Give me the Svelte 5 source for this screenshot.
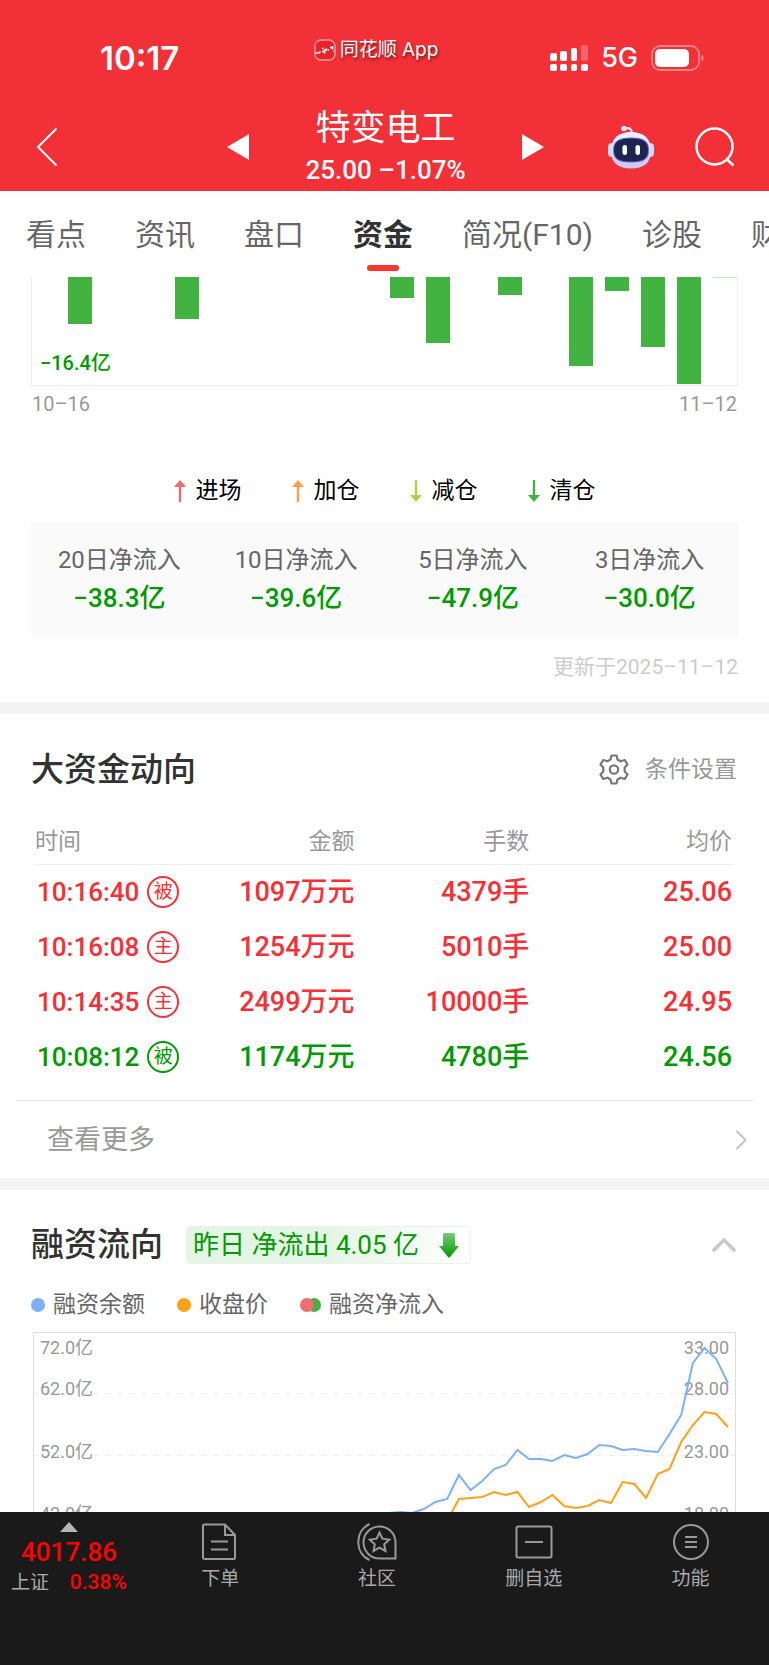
<script>
  const tabs = ['看点', '资讯', '盘口', '资金', '简况(F10)', '诊股', '财务']
  let active = '资金'

  // net outflow per day, in px below the axis
  const bars = [0, 47, 0, 0, 42, 0, 0, 0, 0, 0, 21, 66, 0, 18, 0, 89, 14, 70, 107, 1]

  const arrows = [
    { label: '进场', color: '#f06a6a', up: true },
    { label: '加仓', color: '#ff9f4d', up: true },
    { label: '减仓', color: '#a9d34f', up: false },
    { label: '清仓', color: '#42b340', up: false },
  ]

  const inflows = [
    { label: '20日净流入', value: '−38.3亿' },
    { label: '10日净流入', value: '−39.6亿' },
    { label: '5日净流入', value: '−47.9亿' },
    { label: '3日净流入', value: '−30.0亿' },
  ]

  const trades = [
    { time: '10:16:40', kind: '被', amount: '1097万元', hands: '4379手', price: '25.06', up: true },
    { time: '10:16:08', kind: '主', amount: '1254万元', hands: '5010手', price: '25.00', up: true },
    { time: '10:14:35', kind: '主', amount: '2499万元', hands: '10000手', price: '24.95', up: true },
    { time: '10:08:12', kind: '被', amount: '1174万元', hands: '4780手', price: '24.56', up: false },
  ]

  const balance = [181, 180, 181, 177, 170, 167, 143, 158, 149, 137, 133, 118, 127, 127, 129, 123, 126, 122, 113, 114, 118, 117, 119, 120, 102, 83, 31, 16, 27, 51]
  const close = [189, 167, 166, 165, 160, 163, 160, 175, 170, 163, 174, 176, 174, 168, 171, 150, 152, 166, 142, 137, 110, 93, 80, 82, 95]

  // both series end at the same day on the right
  const line = ys => ys.map((y, i) => `${(695 - (ys.length - 1 - i) * 11.7).toFixed(1)},${y}`).join(' ')

  const ticks = [
    { y: 22, left: '72.0亿', right: '33.00' },
    { y: 63, left: '62.0亿', right: '28.00' },
    { y: 126, left: '52.0亿', right: '23.00' },
    { y: 188, left: '42.0亿', right: '18.00' },
  ]
</script>

<div class="app">
  <header>
    <div class="status">
      <span class="clock">10:17</span>
      <span class="source">
        <svg width="22" height="22" viewBox="0 0 22 22" fill="none">
          <rect x="1" y="1" width="20" height="20" rx="6" fill="#e5252b" stroke="#ff9a9a" stroke-width="1.4" />
          <path d="M1.500 14h2.500M4.500 14.500l2-2M8 9.500h1.500M8 12.500h1.500M10.500 10.500v4M12.500 9.500l-1 2.500M13.500 11h1.500M16 8.500h1.500M18.500 7v3.500M19 12.500h1.500" stroke="#fff" stroke-width="1.700" />
        </svg>
        同花顺 App
      </span>
      <span class="phone">
        <svg width="38" height="28" viewBox="0 0 38 28" fill="#fff">
          <rect x="0" y="9" width="7" height="8" rx="2" />
          <rect x="10" y="7" width="7" height="10" rx="2" />
          <rect x="21" y="4" width="6" height="13" rx="2" />
          <rect x="31" y="1" width="7" height="16" rx="2" opacity=".25" />
          <rect x="0" y="20" width="7" height="7" rx="2" />
          <rect x="10" y="20" width="7" height="7" rx="2" />
          <rect x="21" y="20" width="6" height="7" rx="2" />
          <rect x="31" y="20" width="7" height="7" rx="2" />
        </svg>
        <span class="net">5G</span>
        <svg width="53" height="26" viewBox="0 0 53 26" fill="none">
          <rect x="1" y="1" width="47" height="24" rx="8" stroke="#fff" stroke-opacity=".4" stroke-width="1.800" />
          <rect x="4" y="4" width="34" height="18" rx="5" fill="#fff" />
          <path d="M50.500 9.500q2 1 2 3.500t-2 3.500z" fill="#fff" fill-opacity=".5" />
        </svg>
      </span>
    </div>

    <div class="navbar">
      <button class="back" aria-label="返回">
        <svg width="22" height="40" viewBox="0 0 22 40" fill="none">
          <path d="M20.500 1.500L2 20l18.500 18.500" stroke="#fff" stroke-width="2" />
        </svg>
      </button>
      <div class="stock">
        <button aria-label="上一只">
          <svg width="22" height="26" viewBox="0 0 22 26"><path d="M22 0v26L0 13z" fill="#fff" /></svg>
        </button>
        <div class="name">
          <h1>特变电工</h1>
          <p>25.00 –1.07%</p>
        </div>
        <button aria-label="下一只">
          <svg width="22" height="26" viewBox="0 0 22 26"><path d="M0 0v26l22-13z" fill="#fff" /></svg>
        </button>
      </div>
      <div class="tools">
        <button aria-label="智能助手">
          <svg width="48" height="44" viewBox="0 0 48 44">
            <defs>
              <linearGradient id="shell" x1="0" y1="0" x2="0" y2="1">
                <stop offset="0" stop-color="#f2f2ff" />
                <stop offset="1" stop-color="#c4c8f0" />
              </linearGradient>
              <linearGradient id="visor" x1="0" y1="0" x2="1" y2="1">
                <stop offset="0" stop-color="#4aa0e0" />
                <stop offset=".5" stop-color="#7a50e0" />
                <stop offset="1" stop-color="#6a5af0" />
              </linearGradient>
            </defs>
            <path d="M18 3.500q7-1.500 7 5" fill="none" stroke="#e4e4fa" stroke-width="2.200" />
            <circle cx="17" cy="3.500" r="2.700" fill="#ececff" />
            <rect x="1" y="18" width="8" height="14" rx="4" fill="#d4d6f6" />
            <rect x="39" y="18" width="8" height="14" rx="4" fill="#d4d6f6" />
            <path d="M24 7c12 0 20 6 20 18.500S37 43.500 24 43.500 4 38 4 25.500 12 7 24 7z" fill="url(#shell)" />
            <path d="M24 12.500c11 0 18 2.500 18 12.500s-6 12.500-18 12.500S6 35 6 25s7-12.500 18-12.500z" fill="url(#visor)" />
            <path d="M24 13.500c10.800 0 17 2 17 11.500s-6 11.500-17 11.500S7 34.500 7 25s6.200-11.500 17-11.500z" fill="#1d2450" />
            <rect x="15.500" y="20" width="4.500" height="10" rx="2.200" fill="#fff" />
            <rect x="28.500" y="20" width="4.500" height="10" rx="2.200" fill="#fff" />
          </svg>
        </button>
        <button aria-label="搜索">
          <svg width="40" height="40" viewBox="0 0 40 40" fill="none" stroke="#fff" stroke-width="2.500">
            <circle cx="19.500" cy="19.500" r="18" />
            <path d="M31 31.500l7.500 7" />
          </svg>
        </button>
      </div>
    </div>
  </header>

  <nav class="tabs">
    {#each tabs as tab}
      <button class:active={tab === active} on:click={() => (active = tab)}>{tab}</button>
    {/each}
  </nav>

  <section class="flow">
    <div class="plot">
      {#each bars as height}
        <i class:faint={height === 1} style="height: {height}px"></i>
      {/each}
      <span class="min">−16.4亿</span>
    </div>
    <div class="dates"><span>10–16</span><span>11–12</span></div>

    <ul class="arrows">
      {#each arrows as a}
        <li>
          <svg width="12" height="22" viewBox="0 0 12 22" fill={a.color}>
            {#if a.up}
              <path d="M6 0l6 7H7.200v15H4.800V7H0z" />
            {:else}
              <path d="M6 22l6-7H7.200V0H4.800v15H0z" />
            {/if}
          </svg>
          {a.label}
        </li>
      {/each}
    </ul>

    <dl class="inflows">
      {#each inflows as item}
        <div>
          <dt>{item.label}</dt>
          <dd>{item.value}</dd>
        </div>
      {/each}
    </dl>
    <p class="updated">更新于2025–11–12</p>
  </section>

  <section class="big">
    <div class="head">
      <h2>大资金动向</h2>
      <button class="settings">
        <svg width="32" height="32" viewBox="0 0 32 32" fill="none" stroke="#777" stroke-width="2.200" stroke-linejoin="round">
          <path d="M13.500 1.500h5l1 4 3 1.800 4.300-1.300 2.700 4.500-2.800 3v4l2.800 3-2.700 4.500-4.300-1.300-3 1.800-1 4h-5l-1-4-3-1.800L5.200 25l-2.700-4.500 2.800-3v-4l-2.800-3L5.200 6l4.300 1.300 3-1.800z" />
          <circle cx="16" cy="15.500" r="4.200" />
        </svg>
        条件设置
      </button>
    </div>

    <table>
      <thead>
        <tr><th>时间</th><th>金额</th><th>手数</th><th>均价</th></tr>
      </thead>
      <tbody>
        {#each trades as t}
          <tr class:down={!t.up}>
            <td><div class="time">{t.time}<span class="kind">{t.kind}</span></div></td>
            <td>{t.amount}</td>
            <td>{t.hands}</td>
            <td>{t.price}</td>
          </tr>
        {/each}
      </tbody>
    </table>

    <a class="more" href="#more">
      查看更多
      <svg width="12" height="20" viewBox="0 0 12 20" fill="none">
        <path d="M1.500 1l9 9-9 9" stroke="#c4c4c4" stroke-width="2" />
      </svg>
    </a>
  </section>

  <section class="margin">
    <div class="head">
      <h2>融资流向</h2>
      <span class="badge">
        昨日 净流出 4.05 亿
        <svg width="20" height="25" viewBox="0 0 20 25">
          <defs>
            <linearGradient id="fall" x1="0" y1="0" x2="0" y2="1">
              <stop offset="0" stop-color="#7cc97c" />
              <stop offset="1" stop-color="#009900" />
            </linearGradient>
          </defs>
          <path d="M5.500 0h9q1.500 0 1.500 1.500V13h4l-9 11q-1 1-2 0L0 13h4V1.500Q4 0 5.500 0z" fill="url(#fall)" />
        </svg>
      </span>
      <button class="fold" aria-label="收起">
        <svg width="26" height="16" viewBox="0 0 26 16" fill="none">
          <path d="M2 14L13 3l11 11" stroke="#c8c8c8" stroke-width="3.500" />
        </svg>
      </button>
    </div>

    <ul class="series">
      <li><i class="dot blue"></i>融资余额</li>
      <li><i class="dot orange"></i>收盘价</li>
      <li><span class="pair"><i class="dot red"></i><i class="dot green"></i></span>融资净流入</li>
    </ul>

    <div class="trend">
      <svg viewBox="0 0 705 180">
        <path class="frame" d="M.5 180V.5h702V180" />
        <path class="grid" d="M0 61.500h703M0 123.500h703" />
        {#each ticks as t}
          <text x="7" y={t.y}>{t.left}</text>
          <text x="696" y={t.y} text-anchor="end">{t.right}</text>
        {/each}
        <polyline points={line(close)} stroke="#ffa01e" />
        <polyline points={line(balance)} stroke="#7db1f5" />
      </svg>
    </div>
  </section>

  <footer>
    <a class="index" href="#index">
      <svg width="18" height="10" viewBox="0 0 18 10"><path d="M9 0l9 10H0z" fill="#b4b4b4" /></svg>
      <b>4017.86</b>
      <span>上证 <em>0.38%</em></span>
    </a>
    <a href="#order">
      <svg width="40" height="38" viewBox="0 0 40 38">
        <path d="M4.500 1.500H25l10 10.500v22.500q0 1.500-1.500 1.500h-28Q3 36 3 34.500V3q0-1.500 1.500-1.500zM25 1.500V12h10M11 18.500h17M11 26.500h17" />
      </svg>
      下单
    </a>
    <a href="#community">
      <svg width="40" height="38" viewBox="0 0 40 38">
        <path d="M12.500 1C-2.500 8-2.500 30 12.500 37M38.500 35.500H23A16 16 0 1 1 38.500 19z" />
        <path d="M22.500 9.500l2.900 6.200 6.800.9-5 4.700 1.300 6.700-6-3.300-6 3.300 1.300-6.700-5-4.700 6.800-.9z" />
      </svg>
      社区
    </a>
    <a href="#remove">
      <svg width="40" height="38" viewBox="0 0 40 38">
        <rect x="2.500" y="3.500" width="35" height="31" rx="1.500" />
        <path d="M11 19h18" />
      </svg>
      删自选
    </a>
    <a href="#menu">
      <svg width="40" height="38" viewBox="0 0 40 38">
        <circle cx="20" cy="19" r="17" />
        <path d="M14 14h12M14 19h12M14 24h12" />
      </svg>
      功能
    </a>
  </footer>
</div>

<style>
  :global(body) {
    background: #fff;
  }
  .app {
    display: flex;
    flex-direction: column;
    min-height: 100vh;
    overflow: hidden;
    font-family: Roboto, 'Noto Sans CJK SC', sans-serif;
    color: #323232;
  }
  h1, h2, p, ul, dl, dd {
    margin: 0;
    padding: 0;
    font-weight: 400;
  }
  ul {
    list-style: none;
  }
  button {
    padding: 0;
    border: 0;
    background: none;
    color: inherit;
    font: inherit;
    cursor: pointer;
  }
  a {
    color: inherit;
    text-decoration: none;
  }
  svg {
    display: block;
    flex: none;
  }

  header {
    background: #f23037;
    color: #fff;
  }
  .status {
    display: grid;
    grid-template-columns: 1fr auto 1fr;
    height: 58px;
    padding: 38px 65px 0 48px;
  }
  .clock {
    padding-left: 52px;
    font: 600 33px/40px Inter, sans-serif;
  }
  .source {
    display: flex;
    align-items: center;
    gap: 4px;
    height: 24px;
    font: 19px/24px Inter, 'Noto Sans CJK SC', sans-serif;
    text-shadow: 1px 2px 3px rgba(0, 0, 0, 0.5);
  }
  .phone {
    display: flex;
    justify-content: flex-end;
    align-items: center;
    height: 40px;
  }
  .net {
    margin: 0 13px;
    font: 500 27px/40px Inter, sans-serif;
  }
  .navbar {
    display: grid;
    grid-template-columns: 1fr 318px 1fr;
    align-items: center;
    height: 88px;
    padding: 7px 34px 0 36px;
  }
  .back {
    justify-self: start;
  }
  .stock, .tools {
    display: flex;
    justify-content: space-between;
    align-items: center;
  }
  .tools {
    justify-content: flex-end;
    gap: 40px;
  }
  .name {
    text-align: center;
  }
  h1 {
    padding-top: 2px;
    font-size: 35px;
    line-height: 44px;
  }
  .name p {
    font-size: 26px;
    font-weight: 500;
    line-height: 38px;
  }

  .tabs {
    display: flex;
    gap: 49px;
    height: 67px;
    padding: 19px 0 0 26px;
    white-space: nowrap;
  }
  .tabs button {
    display: flex;
    flex-direction: column;
    align-items: center;
    flex: none;
    gap: 5px;
    font-size: 30px;
    line-height: 50px;
    color: #666;
  }
  .tabs .active {
    color: #323232;
    font-weight: 700;
  }
  .tabs .active::after {
    content: '';
    width: 32px;
    height: 6px;
    border-radius: 3px;
    background: #fc352c;
  }

  .flow {
    padding: 0 31px 20px;
    border-bottom: 12px solid #f4f4f4;
  }
  .plot {
    position: relative;
    display: flex;
    justify-content: space-between;
    height: 108px;
    border: 1px solid #eee;
    border-top: 0;
  }
  .plot i {
    width: 24px;
    background: #42b340;
  }
  .plot .faint {
    opacity: 0.35;
  }
  .min {
    position: absolute;
    left: 8px;
    bottom: 8px;
    color: #090;
    font-size: 20px;
    font-weight: 500;
    line-height: 28px;
  }
  .dates {
    display: flex;
    justify-content: space-between;
    padding: 6px 1px 0;
    font-size: 20px;
    line-height: 24px;
    color: #999;
  }
  .arrows {
    display: flex;
    justify-content: center;
    gap: 50px;
    margin-top: 59px;
    font-size: 23px;
    line-height: 32px;
    color: #000;
  }
  .arrows li {
    display: flex;
    align-items: center;
    gap: 10px;
  }
  .inflows {
    display: grid;
    grid-template-columns: repeat(4, 1fr);
    margin-top: 15px;
    padding: 20px 0 19px;
    background: #fafafa;
    text-align: center;
  }
  dt {
    font-size: 24px;
    line-height: 36px;
    color: #666;
  }
  dd {
    font-size: 26px;
    font-weight: 500;
    line-height: 40px;
    color: #090;
  }
  .updated {
    margin-top: 15px;
    font-size: 21px;
    line-height: 30px;
    color: #ccc;
    text-align: right;
  }

  .head {
    display: flex;
    align-items: center;
    height: 44px;
    padding: 0 32px 0 31px;
  }
  h2 {
    font-size: 33px;
    font-weight: 500;
    line-height: 44px;
  }
  .big {
    padding-top: 34px;
    border-bottom: 12px solid #f4f4f4;
  }
  .settings {
    display: flex;
    align-items: center;
    gap: 15px;
    margin-left: auto;
    font-size: 23px;
    line-height: 32px;
    color: #999;
  }
  table {
    width: calc(100% - 70px);
    margin: 23px 35px 16px;
    border-collapse: collapse;
    table-layout: fixed;
  }
  th, td {
    box-sizing: border-box;
    padding: 0 2px;
    text-align: right;
  }
  th {
    height: 49px;
    padding-top: 6px;
    border-bottom: 1px solid #eee;
    font-size: 23px;
    font-weight: 400;
    line-height: 32px;
    color: #999;
  }
  th:first-child {
    width: 22%;
    padding-left: 0;
    text-align: left;
  }
  th:nth-child(2) {
    width: 24%;
  }
  th:nth-child(3) {
    width: 25%;
  }
  td {
    height: 55px;
    font-size: 27px;
    font-weight: 500;
    line-height: 40px;
    color: #f82f36;
    white-space: nowrap;
  }
  .down td {
    color: #090;
  }
  .time {
    display: flex;
    align-items: center;
    gap: 8px;
    font-size: 26px;
  }
  .kind {
    width: 28px;
    height: 28px;
    border: 2px solid;
    border-radius: 50%;
    font-size: 19px;
    font-weight: 400;
    line-height: 28px;
    text-align: center;
  }
  .more {
    display: flex;
    justify-content: space-between;
    align-items: center;
    height: 77px;
    margin: 0 16px;
    padding: 0 6px 0 31px;
    border-top: 1px solid #e6e6e6;
    font-size: 27px;
    line-height: 40px;
    color: #999;
  }

  .margin {
    padding-top: 33px;
  }
  .badge {
    display: flex;
    align-items: center;
    gap: 20px;
    height: 36px;
    margin-left: 23px;
    padding: 0 11px 0 6px;
    border: 1px solid #e6f5e6;
    border-radius: 4px;
    background: linear-gradient(90deg, #e5f5e5 50%, #fff);
    font-size: 26px;
    line-height: 36px;
    color: #090;
  }
  .fold {
    margin-left: auto;
  }
  .series {
    display: flex;
    gap: 32px;
    margin-top: 22px;
    padding: 0 31px;
    font-size: 23px;
    line-height: 32px;
    color: #666;
  }
  .series li {
    display: flex;
    align-items: center;
    gap: 8px;
  }
  .dot {
    width: 14px;
    height: 14px;
    border-radius: 50%;
  }
  .blue {
    background: #7db1f5;
  }
  .orange {
    background: #ffa01e;
  }
  .red {
    position: relative;
    background: #f06e70;
  }
  .green {
    margin-left: -7px;
    background: #42b340;
  }
  .pair {
    display: flex;
  }
  .trend {
    margin: 11px 31px 0 33px;
  }
  .frame {
    fill: none;
    stroke: #ddd;
  }
  .grid {
    stroke: #eee;
    stroke-dasharray: 6 6;
  }
  text {
    fill: #999;
    font-size: 18px;
  }
  polyline {
    fill: none;
    stroke-width: 2;
  }

  footer {
    display: grid;
    grid-template-columns: 142px repeat(4, 1fr);
    align-items: start;
    flex: 1;
    position: relative;
    min-height: 153px;
    background: #1a1a1a;
    color: #aaa;
    font-size: 19px;
    line-height: 28px;
  }
  footer a {
    display: flex;
    flex-direction: column;
    align-items: center;
    gap: 4px;
    padding-top: 11px;
  }
  footer a:not(.index) svg {
    fill: none;
    stroke: #999;
    stroke-width: 2;
  }
  footer .index {
    gap: 1px;
    padding: 10px 4px 0 0;
  }
  .index b {
    padding-top: 4px;
    font-size: 26px;
    font-weight: 500;
    line-height: 30px;
    color: #f00;
  }
  .index em {
    margin-left: 16px;
    font-size: 21px;
    font-style: normal;
    font-weight: 500;
    color: #f00;
  }
</style>
